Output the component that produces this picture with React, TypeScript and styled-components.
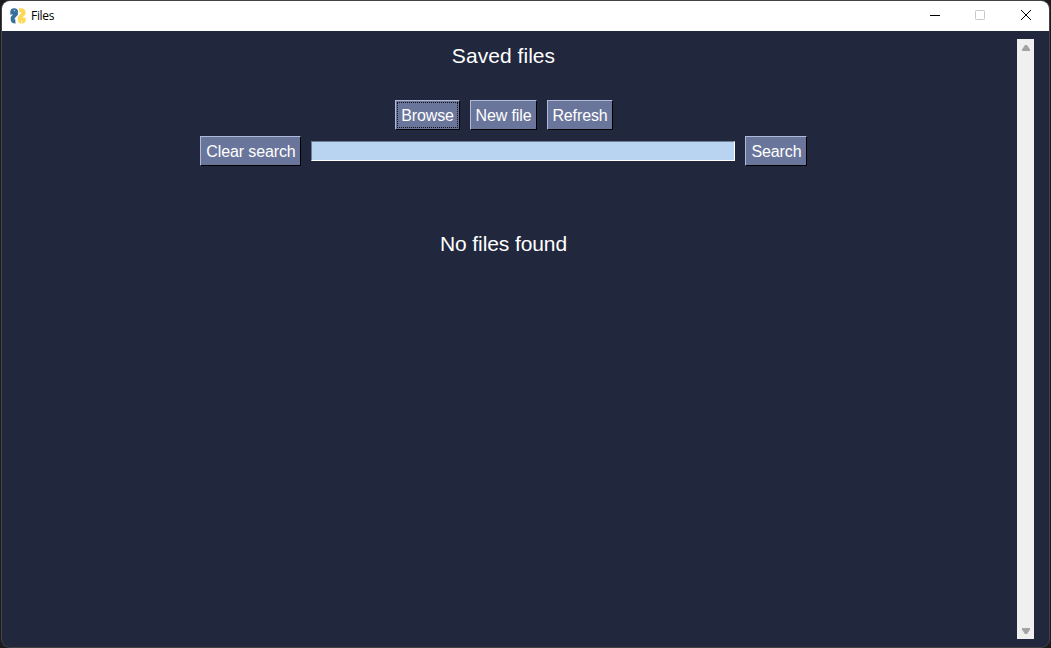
import React from 'react';
import styled, { createGlobalStyle } from 'styled-components';

const GlobalStyle = createGlobalStyle`
  * { box-sizing: border-box; }
  body { margin: 0; background: #1c1c1c; overflow: hidden; }
`;

const Window = styled.div`
  width: 1051px;
  height: 648px;
  padding: 1px 1px 0 1px;
  display: flex;
  background: #1c1c1c;
`;

const Frame = styled.div`
  flex: 1;
  display: flex;
  flex-direction: column;
  overflow: hidden;
  border-radius: 8px;
  background: #21273d;
  box-shadow: 0 0 0 1px #424347;
  font-family: 'Liberation Sans', Arial, sans-serif;
  margin: 0 1px 1px 1px;
`;

const TitleBar = styled.header`
  flex: none;
  height: 30px;
  display: flex;
  align-items: center;
  background: #fff;
  padding-left: 8px;
`;

const Title = styled.span`
  flex: 1;
  margin-left: 5px;
  font: 12px/16px 'Open Sans', 'Noto Sans', sans-serif;
  letter-spacing: -0.3px;
  color: #000;
`;

const Controls = styled.div`
  display: flex;
`;

const Control = styled.span<{ $width?: number; $muted?: boolean }>`
  width: ${(p) => p.$width ?? 46}px;
  height: 30px;
  padding-bottom: 2px;
  display: grid;
  place-items: center;
  color: ${(p) => (p.$muted ? '#c8c8c8' : '#000')};
`;

const Body = styled.main`
  flex: 1;
  display: flex;
  padding: 8px 15px 8px 0;
`;

const Content = styled.section`
  width: 1003px;
  margin-right: 12px;
  display: flex;
  flex-direction: column;
  align-items: center;
`;

const Heading = styled.div<{ $top: number; $tracking?: number }>`
  margin-top: ${(p) => p.$top}px;
  height: 24px;
  font-size: 21px;
  line-height: 24px;
  letter-spacing: ${(p) => p.$tracking ?? 0}px;
  color: #fff;
  white-space: nowrap;
`;

const Row = styled.div<{ $top: number }>`
  margin-top: ${(p) => p.$top}px;
  height: 30px;
  display: flex;
  align-items: center;
  gap: 10px;
`;

const Button = styled.button<{ $width: number; $focused?: boolean }>`
  width: ${(p) => p.$width}px;
  height: 30px;
  padding: 2px 0 0 1px;
  border: 1px solid #000;
  border-top-color: #b1b9d9;
  border-left-color: #b1b9d9;
  border-radius: 0;
  background: #6a759b;
  color: #fff;
  font: 16px/26px 'Liberation Sans', Arial, sans-serif;
  letter-spacing: -0.12px;
  white-space: nowrap;
  outline: ${(p) => (p.$focused ? '1px dotted #111' : 'none')};
  outline-offset: -3px;
`;

const SearchInput = styled.input`
  width: 424px;
  height: 20px;
  padding: 0 2px;
  border: 1px solid #fff;
  border-top-color: #6f7f91;
  border-left-color: #6f7f91;
  border-radius: 0;
  background: #b9d4f1;
  outline: none;
`;

const ScrollBar = styled.div`
  width: 17px;
  height: 600px;
  display: flex;
  flex-direction: column;
  align-items: center;
  justify-content: space-between;
  padding: 6px 0 5px 1px;
  background: #f0f0f0;
`;

const PythonIcon = () => (
  <svg width="16" height="16" viewBox="0 0 16 16" fill="none" strokeLinejoin="round">
    <path stroke="#fcd957" strokeWidth="4" d="M9 2.300h1.800c1.700 0 2.700.8 2.700 2v1.400L9.800 9.600v1.800c0 1.400.7 2.100 1.900 2.100s2.100-.8 2.100-2V9.800" />
    <path stroke="#35719f" strokeWidth="4" d="M2.300 6.400V4.300C2.300 3 3 2.300 4 2.300c1.400 0 2.200.8 2.200 2.200v1.600L2.700 9.600v2.200c0 1 .7 1.700 2.900 1.700" />
    <path stroke="#fff" strokeWidth=".8" d="M8.400 1v5.800L6 9.400v5" />
    <circle cx="4.300" cy="2.600" r=".6" fill="#fff" />
    <circle cx="11.600" cy="13.400" r=".6" fill="#fff" />
  </svg>
);

const Arrow = ({ down = false }: { down?: boolean }) => (
  <svg width="8" height="6" viewBox="0 0 8 6">
    <path
      fill="#a3a3a3"
      d={down ? 'M0 0h8v1.500L5 6H3L0 1.500Z' : 'M0 6h8V4.500L5 0H3L0 4.500Z'}
    />
  </svg>
);

export default function App() {
  return (
    <>
      <GlobalStyle />
      <Window>
        <Frame>
          <TitleBar>
            <PythonIcon />
            <Title>Files</Title>
            <Controls>
              <Control $width={44}>
                <svg width="10" height="10" stroke="currentColor">
                  <path d="M0 5.500h10" />
                </svg>
              </Control>
              <Control $muted>
                <svg width="10" height="10" fill="none" stroke="currentColor">
                  <rect x=".5" y=".5" width="9" height="9" rx=".8" />
                </svg>
              </Control>
              <Control>
                <svg width="10" height="10" stroke="currentColor">
                  <path d="M0 0l10 10M10 0L0 10" />
                </svg>
              </Control>
            </Controls>
          </TitleBar>
          <Body>
            <Content>
              <Heading $top={5} $tracking={0.05}>Saved files</Heading>
              <Row $top={32}>
                <Button $width={65} $focused>Browse</Button>
                <Button $width={67}>New file</Button>
                <Button $width={66}>Refresh</Button>
              </Row>
              <Row $top={6}>
                <Button $width={101}>Clear search</Button>
                <SearchInput aria-label="Search files" />
                <Button $width={62}>Search</Button>
              </Row>
              <Heading $top={66} $tracking={-0.1}>No files found</Heading>
            </Content>
            <ScrollBar>
              <Arrow />
              <Arrow down />
            </ScrollBar>
          </Body>
        </Frame>
      </Window>
    </>
  );
}
